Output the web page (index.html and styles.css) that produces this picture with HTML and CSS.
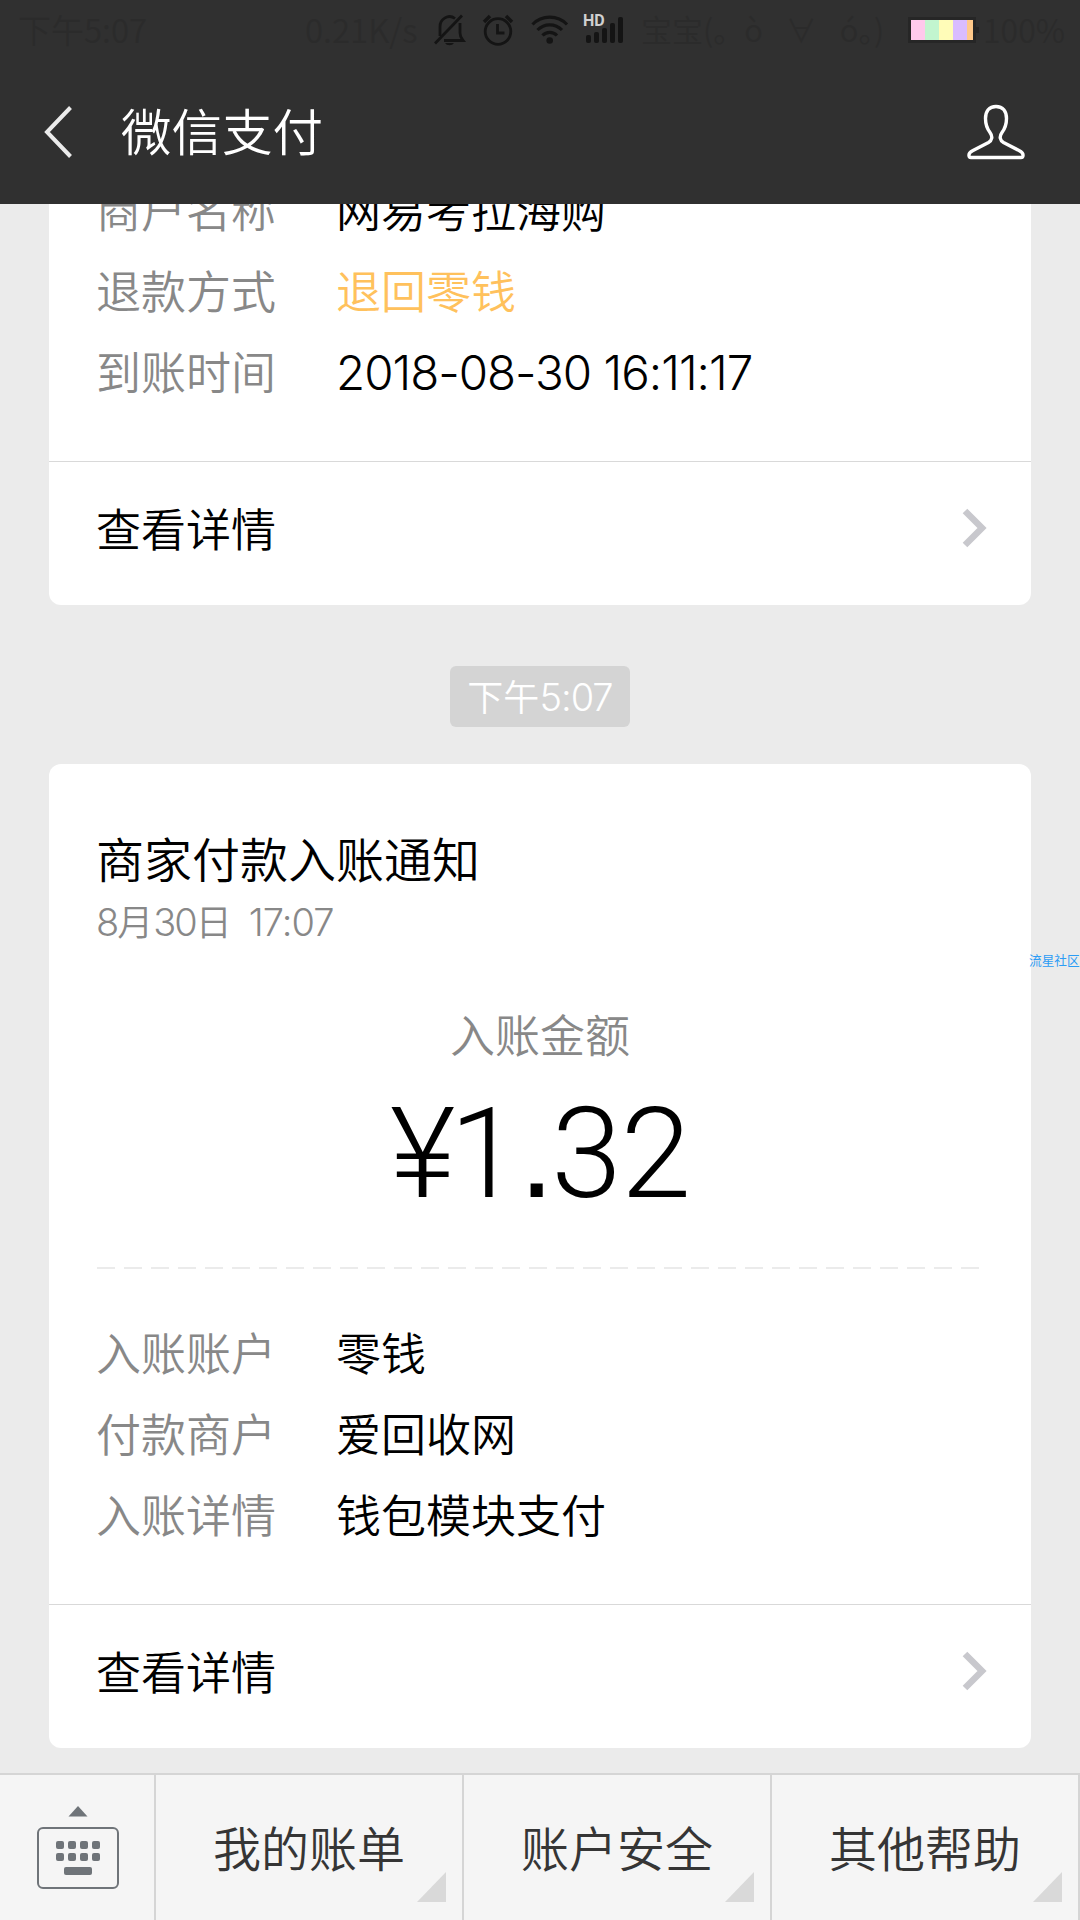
FILE: index.html
```html
<!DOCTYPE html>
<html lang="zh-CN">
<head>
    <meta charset="UTF-8">
    <meta name="viewport" content="width=device-width, initial-scale=1.0">
    <title>微信支付</title>
    <link rel="stylesheet" href="styles.css">
</head>
<body>
    <header class="header">
        <div class="status-bar">
            <span class="status-time">下午5:07</span>
            <span class="status-speed">0.21K/s</span>
            <svg class="status-icons" width="192" height="34" viewBox="0 0 192 34">
                <!-- muted bell -->
                <g fill="none" stroke="#141414" stroke-width="2.8">
                    <path d="M8 23V14a9.500 10 0 0 1 15-8.500M28 10v10q0 4 3 7.500H12"/>
                    <path d="M3 30.500L30 2.500"/>
                </g>
                <path d="M13 30h9a5 4 0 0 1-9 0z" fill="#141414"/>
                <!-- alarm clock -->
                <g fill="none" stroke="#141414" stroke-width="2.8">
                    <circle cx="66" cy="18.500" r="12.800"/>
                    <path d="M65.500 11v9h7"/>
                    <path d="M52 9l6-6M80 9l-6-6" stroke-width="3.500"/>
                </g>
                <!-- wifi -->
                <g fill="none" stroke="#141414" stroke-width="3.2">
                    <path d="M100.500 11.500a24 24 0 0 1 34.500 0"/>
                    <path d="M105.500 17a17 17 0 0 1 24.500 0"/>
                    <path d="M110.500 22.500a10 10 0 0 1 14.500 0"/>
                </g>
                <circle cx="117.700" cy="27.500" r="3.300" fill="#141414"/>
                <!-- signal -->
                <g fill="#141414">
                    <rect x="154" y="22" width="5" height="8" rx="2"/>
                    <rect x="162" y="19" width="5" height="11" rx="2"/>
                    <rect x="170" y="15" width="5" height="15" rx="2"/>
                    <rect x="178" y="10" width="5" height="20" rx="2"/>
                    <rect x="186" y="4" width="5" height="26" rx="2"/>
                </g>
                <text class="hd" x="151" y="12.500">HD</text>
            </svg>
            <span class="status-carrier">宝宝(。ò ∀ ó。)</span>
            <div class="battery">
                <i class="pink"></i>
                <i class="green"></i>
                <i class="yellow"></i>
                <i class="purple"></i>
                <i class="orange"></i>
            </div>
            <span class="status-percent">100%</span>
        </div>
        <div class="nav">
            <svg class="back" width="30" height="54" viewBox="0 0 30 54">
                <path d="M27.500 2.500L4 27l23.500 24.500" fill="none" stroke="#ebebeb" stroke-width="4"/>
            </svg>
            <h1>微信支付</h1>
            <svg class="person" width="58" height="56" viewBox="0 0 58 56">
                <path d="M29 2.500c-7 0-10.500 5-10.500 12 0 6 1.500 10 4.500 14 3 4 2 8-1.500 10L6 46.500c-3 1.500-4.300 3-4 5q0 2 2 2h50q2 0 2-2c.3-2-1-3.500-4-5L36.500 38.500c-3.500-2-4.500-6-1.500-10 3-4 4.500-8 4.500-14 0-7-3.500-12-10.500-12z" fill="none" stroke="#fff" stroke-width="3.400" stroke-linejoin="round"/>
            </svg>
        </div>
    </header>

    <main class="chat">
        <section class="card">
            <dl class="rows">
                <dt>商户名称</dt><dd>网易考拉海购</dd>
                <dt>退款方式</dt><dd class="highlight">退回零钱</dd>
                <dt>到账时间</dt><dd class="datetime">2018-08-30 16:11:17</dd>
            </dl>
            <a class="detail">
                <span>查看详情</span>
                <svg width="26" height="40" viewBox="0 0 26 40">
                    <path d="M3 3l17 17L3 37" fill="none" stroke="#c8c8cd" stroke-width="6.500"/>
                </svg>
            </a>
        </section>

        <div class="time">下午<span class="num">5:07</span></div>

        <section class="card">
            <h2>商家付款入账通知</h2>
            <p class="date"><span class="num">8</span>月<span class="num">30</span>日<span class="num clock">17:07</span></p>
            <p class="amount-label">入账金额</p>
            <p class="amount"><span class="yen">¥</span>1<span class="dot">.</span>32</p>
            <div class="dashes"></div>
            <dl class="rows">
                <dt>入账账户</dt><dd>零钱</dd>
                <dt>付款商户</dt><dd>爱回收网</dd>
                <dt>入账详情</dt><dd>钱包模块支付</dd>
            </dl>
            <a class="detail">
                <span>查看详情</span>
                <svg width="26" height="40" viewBox="0 0 26 40">
                    <path d="M3 3l17 17L3 37" fill="none" stroke="#c8c8cd" stroke-width="6.500"/>
                </svg>
            </a>
        </section>
    </main>

    <footer class="menu">
        <div class="keyboard">
            <svg width="84" height="86" viewBox="0 0 84 86" fill="#6f7479">
                <path d="M42 1l9.500 10.500h-19z"/>
                <rect x="2" y="23" width="80" height="60" rx="5" fill="none" stroke="#6f7479" stroke-width="2"/>
                <rect x="20" y="36" width="8" height="8" rx="2"/>
                <rect x="32" y="36" width="8" height="8" rx="2"/>
                <rect x="44" y="36" width="8" height="8" rx="2"/>
                <rect x="56" y="36" width="8" height="8" rx="2"/>
                <rect x="20" y="48" width="8" height="8" rx="2"/>
                <rect x="32" y="48" width="8" height="8" rx="2"/>
                <rect x="44" y="48" width="8" height="8" rx="2"/>
                <rect x="56" y="48" width="8" height="8" rx="2"/>
                <rect x="28" y="62" width="28" height="8" rx="2"/>
            </svg>
        </div>
        <div class="menu-item">我的账单</div>
        <div class="menu-item">账户安全</div>
        <div class="menu-item">其他帮助</div>
    </footer>

    <div class="watermark">流星社区</div>
</body>
</html>
```

FILE: styles.css
```css
* {
    margin: 0;
    padding: 0;
    box-sizing: border-box;
}

body {
    position: relative;
    width: 1080px;
    height: 1920px;
    display: flex;
    flex-direction: column;
    overflow: hidden;
    background: #ebebeb;
    color: #000;
    font-family: "Noto Sans CJK SC", sans-serif;
    font-weight: 350;
}

/* header */
.header {
    flex: none;
    height: 204px;
    background: #303030;
}

.status-bar {
    height: 60px;
    display: flex;
    align-items: center;
    padding-left: 18px;
    font-size: 33px;
    line-height: 58px;
    color: #2b2b2b;
    white-space: nowrap;
}

.status-bar span {
    height: 60px;
}

.status-time {
    width: 287px;
}

.status-speed {
    width: 127px;
}

.status-icons {
    flex: none;
    width: 192px;
    overflow: visible;
}

.hd {
    font-family: Roboto, sans-serif;
    font-size: 16px;
    font-weight: 700;
    fill: #d0d0d0;
}

.status-carrier {
    width: 284px;
    padding-left: 17px;
    font-size: 31px;
    word-spacing: 16px;
}

.battery {
    position: relative;
    flex: none;
    display: flex;
    width: 68px;
    height: 26px;
    border: 3px solid #262626;
}

.battery::after {
    content: "";
    position: absolute;
    right: -6px;
    top: 7px;
    width: 3px;
    height: 6px;
    background: #262626;
}

.battery i {
    width: 14px;
}

.battery .pink { background: #ffc9ec; }
.battery .green { background: #c2f5cf; }
.battery .yellow { background: #fffcb8; }
.battery .purple { background: #d9bcff; }
.battery .orange { background: #ffc98a; width: 6px; }

.status-percent {
    padding-left: 7px;
    font-size: 32px;
}

.nav {
    height: 144px;
    display: flex;
    align-items: center;
    padding: 0 55px 0 43px;
}

.nav h1 {
    flex: 1;
    height: 144px;
    margin-left: 48px;
    font-size: 50.5px;
    font-weight: 350;
    line-height: 138px;
    color: #fff;
}

/* messages */
.chat {
    flex: 1;
    min-height: 0;
    display: flex;
    flex-direction: column;
    justify-content: flex-end;
    align-items: center;
    padding-bottom: 25px;
    overflow: hidden;
}

.card {
    flex: none;
    width: 982px;
    background: #fff;
    border-radius: 12px;
}

.rows {
    display: grid;
    grid-template-columns: 240px 1fr;
    grid-auto-rows: 81px;
    padding: 0 48px 48px 47px;
    font-size: 45px;
    line-height: 77px;
}

.rows dt {
    color: #888;
}

.rows .highlight {
    color: #ffc15c;
}

.rows .datetime {
    font-family: Inter, sans-serif;
    font-size: 47.5px;
    line-height: 81px;
    letter-spacing: -1px;
}

.detail {
    display: flex;
    justify-content: space-between;
    align-items: center;
    height: 144px;
    padding: 0 43px 11px 47px;
    border-top: 1px solid #d9d9d9;
    font-size: 45px;
}

.detail span {
    padding-bottom: 2px;
}

.num {
    font-family: Inter, sans-serif;
    font-size: 38px;
    line-height: 1;
    letter-spacing: -1px;
}

.time {
    flex: none;
    width: 180px;
    height: 61px;
    margin: 61px 0 37px;
    border-radius: 6px;
    background: #d4d4d4;
    color: #fff;
    font-size: 36px;
    line-height: 59px;
    text-align: center;
}

.card h2 {
    padding: 57px 47px 0;
    font-size: 48px;
    font-weight: 350;
    line-height: 72px;
}

.date {
    height: 54px;
    padding-left: 47px;
    font-size: 36px;
    line-height: 54px;
    color: #888;
}

.date .num {
    letter-spacing: -2px;
}

.date .clock {
    margin-left: 17px;
    letter-spacing: -1px;
}

.amount-label {
    margin-top: 60px;
    font-size: 45px;
    line-height: 54px;
    text-align: center;
    color: #888;
}

.amount {
    font-family: Roboto, sans-serif;
    font-size: 127px;
    font-weight: 300;
    line-height: 150px;
    height: 150px;
    margin-top: 17px;
    text-align: center;
    letter-spacing: -1px;
}

.yen {
    letter-spacing: -6px;
}

.dot {
    font-family: "Liberation Sans", sans-serif;
    letter-spacing: -3px;
}

.dashes {
    height: 2px;
    margin: 39px 51px 0 48px;
    background: repeating-linear-gradient(90deg, #ebebeb 0 18px, transparent 18px 27px);
}

.dashes + .rows {
    padding-top: 44px;
}

/* bottom menu */
.menu {
    flex: none;
    display: flex;
    height: 147px;
    border-top: 2px solid #d5d5d5;
    background: #f5f5f5;
    color: #353535;
}

.keyboard {
    width: 156px;
    padding: 30px 0 0 36px;
    border-right: 2px solid #d5d5d5;
}

.menu-item {
    position: relative;
    flex: 1;
    border-right: 2px solid #d5d5d5;
    font-size: 48px;
    line-height: 143px;
    text-align: center;
}

.menu-item::after {
    content: "";
    position: absolute;
    right: 16px;
    bottom: 18px;
    border-left: 29px solid transparent;
    border-bottom: 30px solid #d9d9d9;
}

.watermark {
    position: absolute;
    left: 1029px;
    top: 950px;
    font-size: 12.7px;
    font-weight: 400;
    line-height: 20px;
    color: #2b9cf5;
    white-space: nowrap;
}
```
